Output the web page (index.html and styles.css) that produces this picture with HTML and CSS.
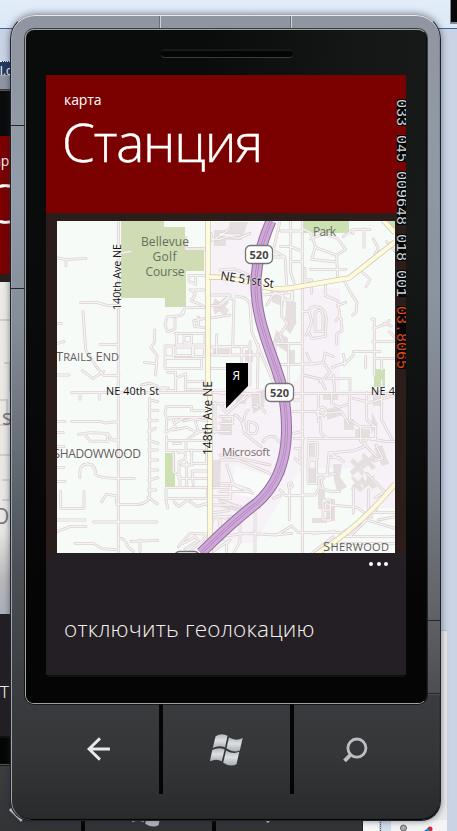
FILE: index.html
```
<!DOCTYPE html>
<html lang="ru">
<head>
<meta charset="utf-8">
<title>Станция</title>
<link rel="stylesheet" href="styles.css">
</head>
<body>
<main class="desktop">
  <div class="titlebar"></div>
  <div class="corner-window"></div>
  <div class="strip">l.c</div>
  <div class="panel"></div>
  <div class="toolwindow">
    <svg width="84" height="11" viewBox="363 820 84 11">
      <path d="M363 820h16v11h-16z" fill="#f7f7f7"/><path d="M380.5 820v11" stroke="#555" stroke-dasharray="1 1"/>
      <path d="M382 820h9v11h-9z" fill="#d4deeb"/><path d="M391 820h56v11h-56z" fill="#f4f4f4"/>
      <circle cx="403.500" cy="828" r="3" fill="#aaa" stroke="#666"/><circle cx="430" cy="829" r="2.500" fill="#d22b35"/><path d="M424 831l4-3 2 3z" fill="#2587cf"/>
    </svg>
  </div>

  <section class="phone phone-back">
    <div class="glass">
      <div class="screen">
        <header class="head"><p class="app">кар</p><h1 class="title">С</h1></header>
        <div class="content">
          <svg class="map" viewBox="-21 282 338 332">
            <defs><linearGradient id="fade" x1="0" y1="0" x2="0" y2="1"><stop offset="0" stop-color="#ecebe7"/><stop offset=".75" stop-color="#e8e7e5"/><stop offset=".9" stop-color="#b9b7b8"/><stop offset="1" stop-color="#a9b0bb"/></linearGradient></defs>
            <path d="M-21 282h338v332h-338z" fill="url(#fade)"/>
            <path d="M0 320h10M4 363h6v28M0 400h7v25H0M0 455h10M2 480h8v20H2" fill="none" stroke="#d3cdcc" stroke-width="2"/>
            <text x="2" y="425" class="back-place">s</text><text x="-7" y="524" class="back-place">O</text>
          </svg>
        </div>
        <footer class="appbar"><span class="dots"></span><span class="command">от</span></footer>
      </div>
    </div>
    <nav class="keys">
      <span class="key"><svg class="icon" viewBox="0 0 40 40"><path d="M32 20H10M21 8.800L9.500 20 21 31.200" fill="none" stroke="#ddd" stroke-width="3"/></svg></span>
      <span class="key"><svg class="icon" viewBox="0 0 40 40"><use href="#flag"/></svg></span>
      <span class="key"><svg class="icon" viewBox="0 0 40 40"><use href="#search"/></svg></span>
    </nav>
  </section>

  <section class="phone phone-front">
    <svg class="seams" viewBox="10 14 431 807">
      <path d="M160.500 16v12M291.500 16v12" stroke="#d0d3d8"/><path d="M159.500 16v12M290.500 16v12" stroke="#6b6f78"/>
      <path d="M11 125.500h14M11 288.500h14M427 620.500h13M427 693.500h13" stroke="#24272c"/>
    </svg>
    <div class="glass">
      <div class="speaker"></div>
      <div class="screen">
        <header class="head"><p class="app">карта</p><h1 class="title">Станция</h1></header>
        <div class="content">
          <svg class="map" viewBox="57 221 338 332">
            <defs>
              <g id="streets">
                <g transform="translate(50 215) scale(.33333)">
                  <path d="M205 18V525M20 128l28 6 60-4M48 134v18M92 263h50l30 8h35M99 290l8 115 32 50 22 26h46M97 467l32 24 32-22M150 388h55M22 325h12M22 385l20-5M22 480h35"/>
                  <path d="M207 114l15-1 20-4M408 68v34h58M314 345v35l-12 18 20 24-4 24-35-4M320 446l-4 34M275 510l25-6 22 10"/>
                  <path d="M465 181h-48v18l20 9v-27M420 225h43M424 225l12 12-12 20 37 16M463 278h-57l-15 24-40 4-6 24 8 20 22-8v-32M405 279l-6 18M463 310l-32 8 3 17 28 2M445 306v26"/>
                  <path d="M375 355h90v35h-85v-35M402 362h22v22h-22zM345 393h25v33h-25zM375 396h53v26h-53zM430 396h33v28h-33zM345 430h110v30H345zM352 472h25v55h-25M378 490l29-14v50M412 500h57v24h-57"/>
                  <path d="M482 55l5 22 53-35M482 70l24 4 34-12M482 240h58M480 272h23l37-30M482 308h10l48-8M482 396h58v24h-58M486 460h54M500 360v55"/>
                </g>
                <g transform="translate(220 215) scale(.33333)">
                  <path d="M0 55l55 15 34-15M247 18V525M212 18v155l10 30M180 18l-20 88 35 20 5 80M182 48h65M182 95h30l35 14M212 140h35M160 126h35"/>
                  <path d="M250 42l22 10 15 45 62 24 28-18-24-32-62-23M272 72l35-14M350 120l3 75M285 98l-10 35 76 8M272 163h106M255 160v35h20v40M370 65l28-21h52M432 42v55M398 44v12M460 72l15 28-10 17M500 80l30 35M478 110l-16 16M420 165l30 28-12 22M372 197l25 45 14 20-3 30-10 9"/>
                  <path d="M316 212v30l38 16 7 56M352 272l25-10M360 300l-13 18M270 300q-10-25 15-25 30 0 34 35l-3 54-40 7-12-24 12-26zM285 292q18-15 24 8v50h-24zM247 290h20M350 387v-30l16-10-2-35M270 340l-12 20"/>
                  <path d="M455 312h8v170M460 340l30-10 18-14M458 380h62M400 410h80M463 430h60M508 350l18 20M485 430v35M437 425v34M492 325l22 8M260 415l15 32 35-5 20 30-30 28M370 418l5 25-38 14M310 442l5-28 24 10M250 447h30M320 490h70v35M340 482l4 44M400 420l-28 30M250 480l50 12 16 30"/>
                  <path d="M170 385h75M140 270l25-40 33 22M185 250v55l18 20-24 35 10 20M205 230h10v25h-28v-24M165 380v145M205 385v140M166 448h80M20 247l22 7-4 140M0 395h90M0 420h115M90 380v130M115 388l-3 130M65 397v45M0 60h60"/>
                  <path d="M92 182l-50-20L0 165M50 245q35 0 40 25l5 80 75 175M125 215q-8 60 10 110l65 200M25 250L0 275M128 240l90-8v25"/>
                </g>
                <g transform="translate(50 380) scale(.33333)">
                  <path d="M205 0v520M65 38h475M90 38v20M148 38v20M20 125h25M65 124h85l15 5 38-4M20 158h20M85 163l35-5 52 2 14 20h18M105 163l15 20 54 1-4-24M20 200h22M20 262h22M20 304h25M90 292q-5-40 22-40 25 0 25 31 8 12 66 12h50M32 335v50h70v-50M155 365l14-22 30 4v26h60q35 0 40-26V55M20 420h84M130 426h190M20 455l40-15h48M75 490h56l24 16 40 3M205 475q20-2 28 24l17 15M243 484l80-3M270 480v35"/>
                  <path d="M300 60l23 5M299 92h25M295 121h27M296 155l20-10M296 180l28 10M296 210h26M298 240h25M298 270h25M296 301l28-8M295 330h23M295 352l27 20M322 38l10-14h22"/>
                  <path d="M350 80h75v12h53v20H350q-10-10 0-32zM350 120l18-8 8 30-28 15zM370 150l40-8 30 16 30-8M400 123l30-7 46 8M376 128l25-15M435 120l10 36-30 20M350 170v42h120v-31H350M370 190h22M408 181v29M425 210v40h45v-36M370 220v55l20 15v30M385 218q26-10 20 18l-18 10v50h85M410 247v70M430 315l-4-42h45M395 255h33M348 323h125v32H348zM348 360l5 25M372 365l15 15 25-20 30 20 35-12M480 323h60M480 70h60M495 68v90M480 155h60M475 350h65v-28M470 375h70"/>
                  <path d="M385 500l35-40 50 2-10 18-40 33M400 490l35-20 10 12-40 25M476 400l60-8M484 440q0-35 30-30l26 10M505 409l14 70M530 520v-30l10-10M480 520l60-40"/>
                </g>
                <g transform="translate(220 380) scale(.33333)">
                  <path d="M247 0v520M0 40h120M220 40h305M222 175h30M265 175h175l60 10h25M295 40v85M388 40v80l34 20v44M220 95h75l20 5 50-5 20 35M292 94q15-25 28 0-5 22-28 10zM300 120l3 40 20 15M335 40v30l20 12 32-10M400 55l50 12 70-20M440 38v80l25 22M485 0v120l32 60M420 140h47v35h-80"/>
                  <path d="M265 188h27v46h-27zM264 240h26v70h-26zM290 285h40M440 175l-8 25-30 12-75 7-5 60-18 25 5 22 20 8h30M330 220l40 24M330 232h28M332 282h15M309 360h22v60h-22zM310 390h20M245 345h40l12-20v-35M310 360l15 14 85 8 45 30M400 320v80M425 185l45 45M440 280l55 55-30 18M445 330v65M468 195l20 40-25 8M0 70l20 30 45-40 15-20M70 60l25-20h25v35l15 22M85 90q-20 20-10 60l12 12M0 110h38v20H0M45 105q25 10 28 55l50 40M105 70q14 2 5 13l-10-4M85 125q40 5 22 35H85zM130 185q10-20 35-14l18 20M0 225l60 10 90 20M0 240h55l95 40M20 255l20 60 58 25M0 310h32v45H0M0 335h90M30 310l60 20M0 362l60 20"/>
                  <path d="M180 330l15 16h55M208 345v75M208 325q-8-16 6-16 8 12-6 16v20M160 355l20-8M105 390v70M0 470l80-10 90 5 45-27 20 20h130l60-30 45-40M105 460v60M60 425v60l-20 35M40 410h-40M0 420v30M160 465l55-5M340 470l-65 50M385 450l60-52h80M390 470l50-50 85 25M370 470h155M365 490h160M280 460l65-5M475 420l50-10M220 160l25-5M222 60h24M225 205h15v45l-15-14"/>
                </g>
              </g>
              <path id="highway" d="M271 221Q258 251 256 278C254 323 276 360 283 391C292 443 284 479 257 503C241 515 219 535 201 553"/>
            </defs>
            <path d="M57 221h338v332H57z" fill="#f7fbf8"/>
            <g fill="#f6f2f7"><path d="M212 222h55l-17 75h-38zM262 288h40v70l-1 16-12 14h-80v155h46l36-60 12-15h50v40h63v-85l37-30V440h-15l-8-50h-90V288z"/><path d="M235 466l40 12-9 23-34-8z" fill="#f8fbfa"/></g>
            <g fill="#e6dfe0">
              <path d="M214 230h12v16h-12zM230 222h18l-6 18h-16zM215 298l14 12-4 6-13-10zM213 308l12-11 4 6-14 12zM270 290l12 2 2 15-12-5zM286 302h10v20h-11zM289 318l8 4-7 12-6-7zM276 330l12 8v15l-15-10zM287 350h8v15h-8zM245 350h8v12h-8zM239 373h8v14h-8zM213 349h19v7h-19zM251 393l15-4-2 18-11 7zM222 418l10 2v15h-13zM236 391h10v13h-10zM213 460h8l-1 28h-8zM225 500l18 6-5 6-18-5z"/>
              <path d="M323 392h15v8h-15zM327 409l12-3 4 9-16 5zM344 419h10v11h-10zM355 429h15v9h-15zM373 390h8v16h-8zM372 412l6 12-7 10zM307 444h8v12h-8zM308 468h8v14h-8zM333 464h9l-2 13 7 10-10 5-3-12zM318 489h7v20h-7zM326 499h9v22h-9zM312 518h15v5h-15zM353 458l5 5 5-5 2 5-5 4 5 5-3 4-4-5-6 5-2-5 5-4-5-5zM364 453l5 5 5-5 2 5-5 4 5 5-4 3-4-5-6 5-2-5 5-4-4-5zM353 476l5 5 5-5 2 5-5 4 4 4-4 3-4-4-6 2 5-7-4-5zM366 473l4 4 5-2-3 6 5 6-5 2-3-4-5 4-2-5 5-5zM374 448l8-3 7 19-7 2zM283 430h8l-2 10h-7zM280 460l8-5-3 20-9 6z"/>
            </g>
            <g fill="#d0dcb4"><path d="M121 221h43v6h21v20h19v24h-18v36h-21v-9h-44z"/><path d="M303 221h46v12h-46zM387 221h8v10zM374 369h11v18h-11zM165 453h10v34h-10z" fill="#cce0b1"/></g>
            <use href="#streets" class="street-edge"/>
            <use href="#streets" class="street-fill"/>
            <path class="road-edge" d="M208 221v160q1 8 2 16v156"/><path class="road-fill" d="M208 221v160q1 8 2 16v156"/>
            <path class="road-edge" d="M209 277q24 0 42 6 20 8 40 5l58-10 23-18 23-18M383 220l12 13M315 555q45-28 80-71"/>
            <path class="road-fill" d="M209 277q24 0 42 6 20 8 40 5l58-10 23-18 23-18M383 220l12 13M315 555q45-28 80-71"/>
            <use href="#highway" class="hw-edge"/><use href="#highway" class="hw-fill"/><use href="#highway" class="hw-mid"/><use href="#highway" class="hw-core"/>
            <g class="shield"><rect x="245.500" y="245.500" width="27" height="18" rx="5"/><rect x="265.500" y="383.500" width="28" height="18" rx="5"/><rect x="174.500" y="551.500" width="25" height="18" rx="5"/></g>
            <g class="shield-text"><text x="249.500" y="258.500" textLength="19">520</text><text x="270" y="396.500" textLength="19">520</text></g>
            <g class="green-label"><text x="141" y="245.500" textLength="48">Bellevue</text><text x="152.500" y="260.500" textLength="24">Golf</text><text x="145.500" y="276" textLength="39">Course</text><text x="313" y="235.500" textLength="23">Park</text></g>
            <g class="street-label">
              <text x="106" y="394.500" textLength="53">NE 40th St</text><text x="371" y="394.500" textLength="24">NE 4</text>
              <text transform="translate(120.500 310) rotate(-90)" textLength="66">140th Ave NE</text>
              <text transform="translate(211.500 455) rotate(-90)" textLength="74" class="bigger">148th Ave NE</text>
              <text transform="translate(220 279.500) rotate(9)" textLength="54" class="bigger">NE 51st St</text>
            </g>
            <g class="place-label">
              <text x="56" y="361" textLength="63">T<tspan class="sc">RAILS</tspan> E<tspan class="sc">ND</tspan></text>
              <text x="53" y="457.500" textLength="88">S<tspan class="sc2">HADOWWOOD</tspan></text>
              <text x="323" y="550.500" textLength="66">S<tspan class="sc">HERWOOD</tspan></text>
              <text x="222" y="456" textLength="48" class="poi">Microsoft</text>
            </g>
            <path d="M226 363h22v23l-22 22.500z" fill="#000"/><text x="232.500" y="380" class="pin">Я</text>
          </svg>
        </div>
        <footer class="appbar"><span class="dots"><i></i><i></i><i></i></span><span class="command">отключить геолокацию</span></footer>
        <div class="counters"><span>033</span><span>045</span><span>009648</span><span>018</span><span>001</span><span class="fill-rate">03.8065</span></div>
      </div>
    </div>
    <nav class="keys">
      <span class="key"><svg class="icon" viewBox="0 0 40 40"><path d="M31.500 20H9M21 8.800L9.500 20 21 31.200" fill="none" stroke="#e9e9ec" stroke-width="3"/></svg></span>
      <span class="key"><svg class="icon" viewBox="0 0 40 40"><defs><linearGradient id="metal" x1="0" y1="0" x2="0" y2="1"><stop offset="0" stop-color="#b4b8bc"/><stop offset=".45" stop-color="#dde0e2"/><stop offset="1" stop-color="#a9adb3"/></linearGradient></defs>
        <g id="flag" fill="url(#metal)" transform="translate(1.500 1)"><path d="M6.500 5.500Q13 1.500 19 5L16.500 17.500Q10.500 14.500 3.500 18z"/><path d="M20.500 7Q28 11 35 7.500L32 20.500Q26 23.500 18 18.500z"/><path d="M3 20Q10 16.500 16 19.500L13 32Q7.500 28.500 .5 32z"/><path d="M17.500 20.500Q25 25 31.500 22L28.500 35Q22 38.500 14.500 33.500z"/></g></svg></span>
      <span class="key"><svg class="icon" viewBox="0 0 40 40"><g id="search" fill="none" stroke="#bbbec3" stroke-width="3"><circle cx="22" cy="19" r="9.500"/><path d="M15.500 26L9 32.500" stroke-width="4"/></g></svg></span>
    </nav>
  </section>
</main>
</body>
</html>
```

FILE: styles.css
```
* { box-sizing: border-box; }
body { margin: 0; }
.desktop { position: relative; width: 457px; height: 831px; overflow: hidden; background: #c9d3e4; font-family: "Open Sans", "Noto Sans", sans-serif; }
.titlebar { height: 29px; background: linear-gradient(#e3edf9, #dce8f6); border-bottom: 1px solid #3d659f; }
.corner-window { position: absolute; left: 450px; top: 0; width: 7px; height: 24px; background: #080808; border: solid #858b94; border-width: 0 0 2px 1px; }
.strip { position: absolute; left: 0; top: 61px; width: 12px; height: 16px; overflow: hidden; background: #26395f; border-top: 1px dotted #fff; color: #fff; font: 12px/19px "Liberation Sans", sans-serif; }
.panel { position: absolute; left: 430px; top: 630px; width: 17px; height: 201px; background: #e9e9e9; border-top: 1px solid #c5c0bc; }
.toolwindow { position: absolute; left: 363px; top: 820px; height: 11px; }
.toolwindow svg { display: block; }

.phone { position: absolute; isolation: isolate; width: 431px; height: 807px; border-radius: 25px 25px 20px 20px; padding: 15px 14px 0 15px; border: 1px solid #202226; border-top-color: #aaa; background: linear-gradient(#8f95a1 0, #939ca9 22%, #858d99 38%, #4c5157 68%, #404245 82%, #343638 92%, #292a2c 100%); }
.phone-front { left: 10px; top: 14px; box-shadow: 0 0 7px rgba(25, 35, 55, .55), inset 0 1px 0 #e6e8eb, inset 1px 0 0 #9da4ae, inset 0 -1px 1px #050505; }
.phone-front { background: linear-gradient(#8f95a1 0, #939ca9 22%, #858d99 38%, #4c5157 68%, #3a3c3f 84%, #343638 92%, #292a2c 100%); }
.phone-front::after { content: ""; position: absolute; right: 0; top: 60px; width: 13px; height: 620px; background: linear-gradient(rgba(140, 148, 162, 0), #8c94a2 35%, #777d87 65%, #626569 85%, #4b4d51); }
.phone-back { left: -68px; top: 75px; }
.phone-back .head { padding-left: 18px; }
.seams { position: absolute; left: -1px; top: -1px; width: 431px; height: 807px; z-index: 2; }
.glass { position: relative; z-index: 1; width: 402px; height: 675px; margin-left: -1px; margin-top: -1px; padding: 46px 0 0 21px; border: 1px solid #a2a29f; border-right-color: #0a0a0a; border-radius: 9px; background: linear-gradient(100deg, #0a0c0b 0 35%, #151716 65%, #191a1a 90%); box-shadow: 0 0 0 1px rgba(0, 0, 0, .6); }
.glass::before { content: ""; position: absolute; inset: 0; border-radius: 8px; background: linear-gradient(transparent 30%, #050505 85%); }
.phone-back .glass { border-color: #555; }
.speaker { position: absolute; left: 135px; top: 19px; width: 132px; height: 9px; border-radius: 4px; background: #040505; border-top: 2px solid #191919; border-bottom: 1px solid #3a3c3c; }
.screen { position: relative; width: 360px; height: 600px; margin-left: -1px; margin-top: -1px; overflow: hidden; background: #2a1d1a; box-shadow: 0 4px 0 -2px #111; }
.head { height: 138px; padding: 15px 0 0 18px; background: #7b0000; color: #fff; }
.app { margin: 0; font-size: 14px; line-height: 20px; letter-spacing: -.1px; }
.title { margin: -4px 0 0 -2px; font-size: 53px; line-height: 72px; font-weight: 300; letter-spacing: -1.200px; white-space: nowrap; -webkit-text-stroke: .4px #fff; }
.content { height: 340px; padding: 8px 0 0 11px; }
.map { display: block; width: 338px; height: 332px; overflow: hidden; }
.appbar { display: flex; flex-direction: column; height: 122px; padding: 9px 18px 0; background: #231f24; color: #f3f1ec; }
.dots { display: flex; align-self: flex-end; gap: 3.500px; height: 49px; }
.dots i { width: 4px; height: 4px; border-radius: 50%; background: #fff; }
.command { font-size: 22.500px; line-height: 36px; font-weight: 300; letter-spacing: .2px; white-space: nowrap; }
.counters { position: absolute; right: 0; top: 24px; display: flex; gap: 9px; writing-mode: vertical-rl; font: 15px/7px "Liberation Mono", monospace; color: #cfd6d6; }
.counters span { padding-right: 2px; background: #050505; }
.counters .fill-rate { color: #e24a12; }
.keys { position: relative; z-index: 1; display: flex; height: 116px; margin: 0 -13px 0 -14px; }
.key { display: flex; flex: 0 0 131px; height: 90px; align-items: center; justify-content: center; border-right: 4px solid #050505; }
.key:first-child { flex-basis: 151px; padding-left: 27px; }
.key:last-child { border: 0; flex-basis: 130px; padding-right: 9px; }
.icon { width: 40px; height: 40px; padding: 1px; }

.street-edge { fill: none; stroke: #dbd2d4; stroke-width: 8.500; stroke-linejoin: round; stroke-linecap: round; }
.street-fill { fill: none; stroke: #f8f4f5; stroke-width: 3.800; stroke-linejoin: round; stroke-linecap: round; }
.road-edge, .road-fill, .hw-edge, .hw-fill, .hw-mid, .hw-core { fill: none; }
.road-edge { stroke: #d2c9b8; stroke-width: 5.500; }
.road-fill { stroke: #fdfbdc; stroke-width: 4; }
.hw-edge { stroke: #926f99; stroke-width: 11; }
.hw-fill { stroke: #cfa7dc; stroke-width: 9; }
.hw-mid { stroke: #ad87b5; stroke-width: 2.800; }
.hw-core { stroke: #cfacd6; stroke-width: 1.300; }
.shield { fill: #fff; stroke: #777; stroke-width: 1.300; }
.shield-text { font-size: 11px; font-weight: 700; fill: #444; }
.green-label { font-size: 12px; fill: #65725a; }
.street-label { font-size: 10.800px; fill: #111; paint-order: stroke; stroke: rgba(255, 255, 255, .6); stroke-width: 1px; }
.street-label .bigger { font-size: 12px; }
.place-label { font-size: 13px; fill: #655c5d; }
.sc { font-size: 11px; }
.sc2 { font-size: 12px; }
.poi { font-size: 11.500px; fill: #81706e; }
.pin { font-size: 12px; fill: #fff; }
.back-place { font-size: 21px; fill: #7b7273; }
```
